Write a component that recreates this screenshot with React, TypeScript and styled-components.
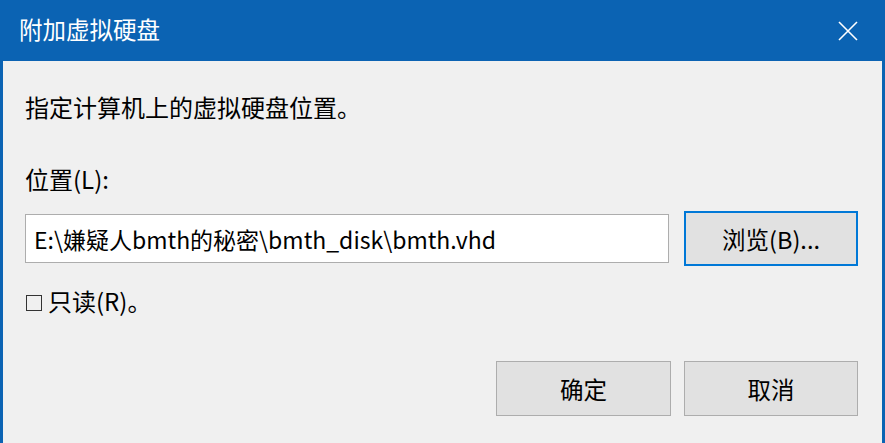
import styled, { createGlobalStyle } from "styled-components";

const GlobalStyle = createGlobalStyle`
  html, body {
    margin: 0;
    padding: 0;
    background: #f0f0f0;
    overflow: hidden;
  }
  body {
    font-family: "Noto Sans CJK SC", "Noto Sans", sans-serif;
  }
`;

const accent = "#0b63b3";

const Window = styled.div`
  width: 885px;
  height: 443px;
  box-sizing: border-box;
  border-left: 3px solid ${accent};
  border-right: 3px solid ${accent};
  background: #f0f0f0;
  display: flex;
  flex-direction: column;
`;

const TitleBar = styled.div`
  height: 61px;
  flex: none;
  background: ${accent};
  display: flex;
  align-items: center;
  justify-content: space-between;
  margin: 0 -3px;
  padding: 0 26px 0 19px;
`;

const Title = styled.div`
  color: #fff;
  font-size: 23.5px;
  line-height: 1;
  margin-top: -1px;
`;

const CloseButton = styled.div`
  width: 22px;
  height: 22px;
  display: flex;
  align-items: center;
  justify-content: center;
`;

const Body = styled.div`
  display: flex;
  flex-direction: column;
  padding: 0 24px 0 22px;
`;

const Label = styled.div<{ $top: number }>`
  margin-top: ${(p) => p.$top}px;
  font-size: 24px;
  line-height: 30px;
  color: #000;
`;

const Row = styled.div`
  display: flex;
  align-items: center;
  gap: 15px;
  margin-top: 17px;
`;

const PathBox = styled.div`
  flex: 1;
  height: 49px;
  box-sizing: border-box;
  background: #fff;
  border: 1px solid #adadad;
  display: flex;
  align-items: center;
  padding-left: 8px;
  font-size: 23px;
  color: #000;
  white-space: nowrap;
`;

const Button = styled.div<{ $focused?: boolean; $w: number }>`
  width: ${(p) => p.$w}px;
  height: 55px;
  box-sizing: border-box;
  background: #e1e1e1;
  border: ${(p) => (p.$focused ? `2px solid #0078d7` : `1px solid #adadad`)};
  display: flex;
  align-items: center;
  justify-content: center;
  font-size: 23.5px;
  color: #000;
`;

const Check = styled.div`
  display: flex;
  align-items: center;
  gap: 6px;
  margin-top: 20px;
  font-size: 24px;
  line-height: 30px;
  color: #000;
`;

const Box = styled.span`
  width: 14px;
  height: 14px;
  border: 1.5px solid #333;
  margin-left: 1px;
  margin-top: 3px;
`;

const Footer = styled.div`
  display: flex;
  justify-content: flex-end;
  gap: 13px;
  margin-top: 45px;
`;

export default function App() {
  return (
    <>
      <GlobalStyle />
      <Window>
        <TitleBar>
          <Title>附加虚拟硬盘</Title>
          <CloseButton>
            <svg width="22" height="22" viewBox="0 0 22 22">
              <path
                d="M2 2 L20 20 M20 2 L2 20"
                stroke="#fff"
                strokeWidth="1.6"
                fill="none"
              />
            </svg>
          </CloseButton>
        </TitleBar>
        <Body>
          <Label $top={31}>指定计算机上的虚拟硬盘位置。</Label>
          <Label $top={42}>位置(L):</Label>
          <Row>
            <PathBox>E:\嫌疑人bmth的秘密\bmth_disk\bmth.vhd</PathBox>
            <Button $focused $w={174}>
              浏览(B)...
            </Button>
          </Row>
          <Check>
            <Box />
            只读(R)。
          </Check>
          <Footer>
            <Button $w={175}>确定</Button>
            <Button $w={174}>取消</Button>
          </Footer>
        </Body>
      </Window>
    </>
  );
}
